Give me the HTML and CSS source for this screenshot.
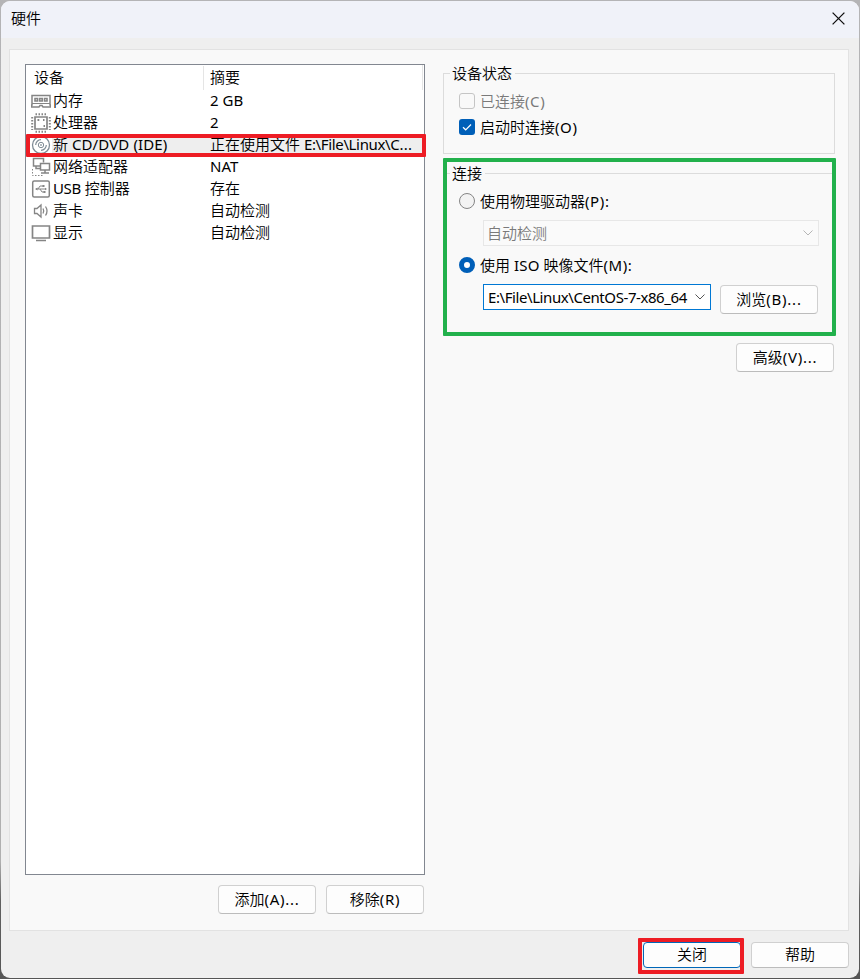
FILE: index.html
```html
<!DOCTYPE html>
<html lang="zh-CN">
<head>
<meta charset="utf-8">
<title>硬件</title>
<link rel="stylesheet" href="styles.css">
</head>
<body>
<main class="dialog">
  <header class="titlebar">
    <h1>硬件</h1>
    <svg class="close" viewBox="0 0 13 13" width="13" height="13"><path d="M.6.6l11.8 11.8M12.4.6L.6 12.4" fill="none" stroke="#111" stroke-width="1.3"/></svg>
  </header>
  <section class="panel">
    <div class="left">
      <div class="list">
        <div class="head"><span class="name">设备</span><span class="summary">摘要</span></div>
        <div class="row">
          <svg viewBox="0 0 20 20" width="20" height="20" fill="none" stroke="#858585"><path d="M1 4.500h18v9.500h.500v2h-7.500l-1-1.500h-2l-1 1.500h-7.500v-2h.500z" stroke-width="1.500"/><path d="M1 12.500h18" stroke-width="1.200"/><path d="M4 7.500h2.500v2.500h-2.500zM8.700 7.500h2.500v2.500h-2.500zM13.500 7.500h2.500v2.500h-2.500z" stroke-width="1.600"/></svg>
          <span class="name">内存</span><span class="summary latin">2 GB</span>
        </div>
        <div class="row">
          <svg viewBox="0 0 20 20" width="20" height="20" fill="none" stroke="#858585"><path d="M4 4h12v12H4z" stroke-width="1.700"/><path d="M4.500 1.200h12M4.500 18.800h12" stroke-width="2" stroke-dasharray="1.500 1.500"/><path d="M1.200 4v13M18.800 4v13" stroke-width="2" stroke-dasharray="1.500 1.500"/><path d="M6.500 7h1.800M12 7h1.500M12.500 13h1.500" stroke-width="1.800"/></svg>
          <span class="name">处理器</span><span class="summary latin">2</span>
        </div>
        <div class="row selected">
          <svg viewBox="0 0 20 20" width="20" height="20" fill="none" stroke="#7f8c96"><circle cx="10" cy="10" r="8.500" fill="#fff" stroke-width="1.300"/><circle cx="10" cy="10" r="2.700"/><circle cx="10" cy="10" r=".5"/><path d="M10 4.700A5.300 5.300 0 0 0 4.700 10M10 15.300a5.300 5.300 0 0 0 5.300-5.300" stroke-width="1.200"/></svg>
          <span class="name">新 <span class="latin cd">CD/DVD (IDE)</span></span><span class="summary">正在使用文件 <span class="latin file">E:\File\Linux\C<span class="dots">...</span></span></span>
        </div>
        <div class="row">
          <svg viewBox="0 0 20 20" width="20" height="20" fill="none" stroke="#858585"><path d="M9 9H2.500V1.500h10v4M5 9v2.500h4" stroke-width="1.500"/><path d="M9.500 6.500h9v6.500h-9zM14 13v2.500M10 16h8" stroke-width="1.500"/><path d="M1.500 12v6.500h10" stroke-dasharray="1.500 1.500"/></svg>
          <span class="name">网络适配器</span><span class="summary latin">NAT</span>
        </div>
        <div class="row">
          <svg viewBox="0 0 20 20" width="20" height="20" fill="none" stroke="#858585"><rect x="1.700" y="2" width="16.600" height="16" rx="1.500" stroke-width="1.500"/><path d="M5 10h10M7 10l2-3h3M9 10l2 3h2"/><path d="M4 10l2.500-1.500v3zM11.500 6h2v2h-2zM12.500 12h2v2h-2zM14 8.800v2.400l2-1.200z" fill="#858585" stroke="none"/></svg>
          <span class="name"><span class="latin usb">USB</span> 控制器</span><span class="summary">存在</span>
        </div>
        <div class="row">
          <svg viewBox="0 0 20 20" width="20" height="20" fill="none" stroke="#858585" stroke-width="1.300"><path d="M3.500 7.500h2.500l4-3.500v12l-4-3.500H3.500zM12 7.500q1.500 2.500 0 5M14.500 5.500q3 4.500 0 9"/></svg>
          <span class="name">声卡</span><span class="summary">自动检测</span>
        </div>
        <div class="row">
          <svg viewBox="0 0 20 20" width="20" height="20" fill="none" stroke="#858585"><path d="M1.500 3h17v12H1.500z" stroke-width="1.700"/><path d="M5 17.500h10" stroke-width="1.600"/></svg>
          <span class="name">显示</span><span class="summary">自动检测</span>
        </div>
      </div>
      <div class="list-actions"><button>添加<span>(A)...</span></button><button>移除<span>(R)</span></button></div>
    </div>
    <div class="right">
      <section class="group status">
        <h2>设备状态</h2>
        <label class="choice muted"><i class="box"></i>已连接<span>(C)</span></label>
        <label class="choice"><i class="box checked"><svg viewBox="0 0 16 16" width="16" height="16"><path d="M4 8.200l2.700 2.600L12 5.500" fill="none" stroke="#fff" stroke-width="1.200"/></svg></i>启动时连接<span>(O)</span></label>
      </section>
      <section class="group connection">
        <h2>连接</h2>
        <label class="choice"><i class="radio"></i>使用物理驱动器<span>(P):</span></label>
        <div class="combo disabled">自动检测<svg viewBox="0 0 10 6" width="10" height="6"><path d="M.5.500L5 5 9.500.500" fill="none" stroke="#b5b5b5"/></svg></div>
        <label class="choice"><i class="radio on"></i>使用 <span class="iso">ISO</span> 映像文件<span>(M):</span></label>
        <div class="iso-row">
          <div class="combo active"><span class="latin path">E:\File\Linux\CentOS-7-x86_64</span><svg viewBox="0 0 10 6" width="10" height="6"><path d="M.5.500L5 5 9.500.500" fill="none" stroke="#555"/></svg></div>
          <button>浏览<span>(B)...</span></button>
        </div>
      </section>
      <button class="advanced">高级<span>(V)...</span></button>
    </div>
  </section>
  <footer><button class="primary">关闭</button><button>帮助</button></footer>
</main>
</body>
</html>
```

FILE: styles.css
```css
* { box-sizing: border-box; }
body {
  margin: 0;
  width: 860px;
  height: 979px;
  padding: 1px;
  overflow: hidden;
  background: linear-gradient(#b4b4b6, #b0b0b0 88%, #606060 92%, #555);
  color: #000;
  font: 350 15px/22px "Noto Sans", "Noto Sans CJK SC", sans-serif;
}
h1, h2 { margin: 0; font: inherit; }
.latin, button span, .choice span { font-weight: 400; }
.dialog {
  height: 977px;
  border-radius: 9px;
  background: #efefef;
  overflow: hidden;
}
.titlebar {
  display: flex;
  justify-content: space-between;
  height: 37px;
  padding: 6px 14px 0 10px;
  background: #f0f2f9;
}
.close { margin-top: 5px; }
.panel {
  display: flex;
  width: 840px;
  height: 882px;
  margin: 11px 0 0 8px;
  padding: 14px 13px 0 15px;
  border: 1px solid #e2e2e2;
  background: #f9f9f9;
}
.left { width: 400px; flex: none; }
.list {
  height: 811px;
  border: 1px solid #828790;
  background: #fff;
}
.head {
  display: flex;
  height: 25px;
  padding: 1px 0 0 8px;
  margin-right: 1px;
  border-right: 1px solid #e5e5e5;
}
.head .name { width: 169px; }
.head .summary {
  border-left: 1px solid #e5e5e5;
  padding-left: 6px;
}
.row {
  display: flex;
  height: 22px;
  padding-left: 5px;
  position: relative;
  white-space: nowrap;
}
.row svg { margin: 1px 2px 0 0; flex: none; }
.row .name { width: 157px; }
.row .name, .row .summary { line-height: 21px; }
.row.selected { background: linear-gradient(90deg, #fff 26px, #eee 26px); }
.row.selected::after {
  content: "";
  position: absolute;
  inset: 0 -2px -1px 0;
  border: 4px solid #ed1c24;
  border-radius: 1px;
}
.cd { letter-spacing: .12px; }
.file { letter-spacing: -.35px; }
.dots { letter-spacing: .2px; }
.usb { letter-spacing: -.4px; }
.list-actions {
  display: flex;
  justify-content: flex-end;
  gap: 10px;
  padding: 10px 1px 0 0;
}
button {
  width: 98px;
  height: 29px;
  padding: 0 0 1px;
  border: 1px solid #d0d0d0;
  border-bottom-color: #bcbcbc;
  border-radius: 4px;
  background: #fdfdfd;
  color: #000;
  font: inherit;
  line-height: 25px;
}
button span { letter-spacing: .75px; }
.right { width: 392px; flex: none; margin: 9px 0 0 18px; }
.group {
  border: 1px solid #dcdcdc;
  padding-left: 15px;
}
.group h2 {
  width: max-content;
  height: 22px;
  margin: -12px 0 0 -9px;
  padding: 0 3px 0 2px;
  background: #f9f9f9;
  line-height: 22px;
}
.status { height: 81px; }
.choice {
  display: flex;
  align-items: center;
  height: 26px;
  white-space: pre;
}
.choice span { letter-spacing: .6px; }
.choice .iso { letter-spacing: .2px; }
.status h2 + .choice { margin-top: 4px; }
.box, .radio {
  display: block;
  width: 16px;
  height: 16px;
  margin-right: 5px;
  border: 1px solid #c5c5c5;
  border-radius: 3px;
}
.box.checked { border: 0; background: #005fb8; }
.box svg { display: block; }
.radio { border-radius: 50%; border-color: #858585; background: #f3f3f3; }
.radio.on { border: 5px solid #005fb8; background: #fff; }
.muted { color: #7a7a7a; }
.connection {
  position: relative;
  height: 163px;
  margin-top: 19px;
}
.connection::after {
  content: "";
  position: absolute;
  inset: -16px -2px -1px -1px;
  border: 4px solid #22b14c;
  border-radius: 1px;
}
.connection h2 + .choice { margin-top: 4px; }
.combo {
  display: flex;
  align-items: center;
  justify-content: space-between;
  width: 336px;
  height: 26px;
  margin: 6px 0 6px 24px;
  padding: 0 5px 0 3px;
  border: 1px solid #e7e7e7;
  white-space: nowrap;
}
.combo.disabled { color: #7a7a7a; background: #fafafa; line-height: 20px; }
.iso-row { display: flex; gap: 9px; }
.combo.active {
  width: 228px;
  margin-bottom: 0;
  padding-left: 4px;
  border-color: #0078d4;
  background: #fff;
}
.path { letter-spacing: -.42px; margin-top: -1px; }
.iso-row button { margin-top: 7px; }
.advanced { display: block; margin: 7px 1px 0 auto; }
footer {
  display: flex;
  justify-content: flex-end;
  gap: 10px;
  padding: 11px 10px 0 0;
}
footer button { height: 26px; line-height: 23px; }
.primary { position: relative; border-color: #0067b8; }
.primary::after {
  content: "";
  position: absolute;
  inset: -5px -4px -7px -6px;
  border: 4px solid #ed1c24;
  border-radius: 1px;
}
```
